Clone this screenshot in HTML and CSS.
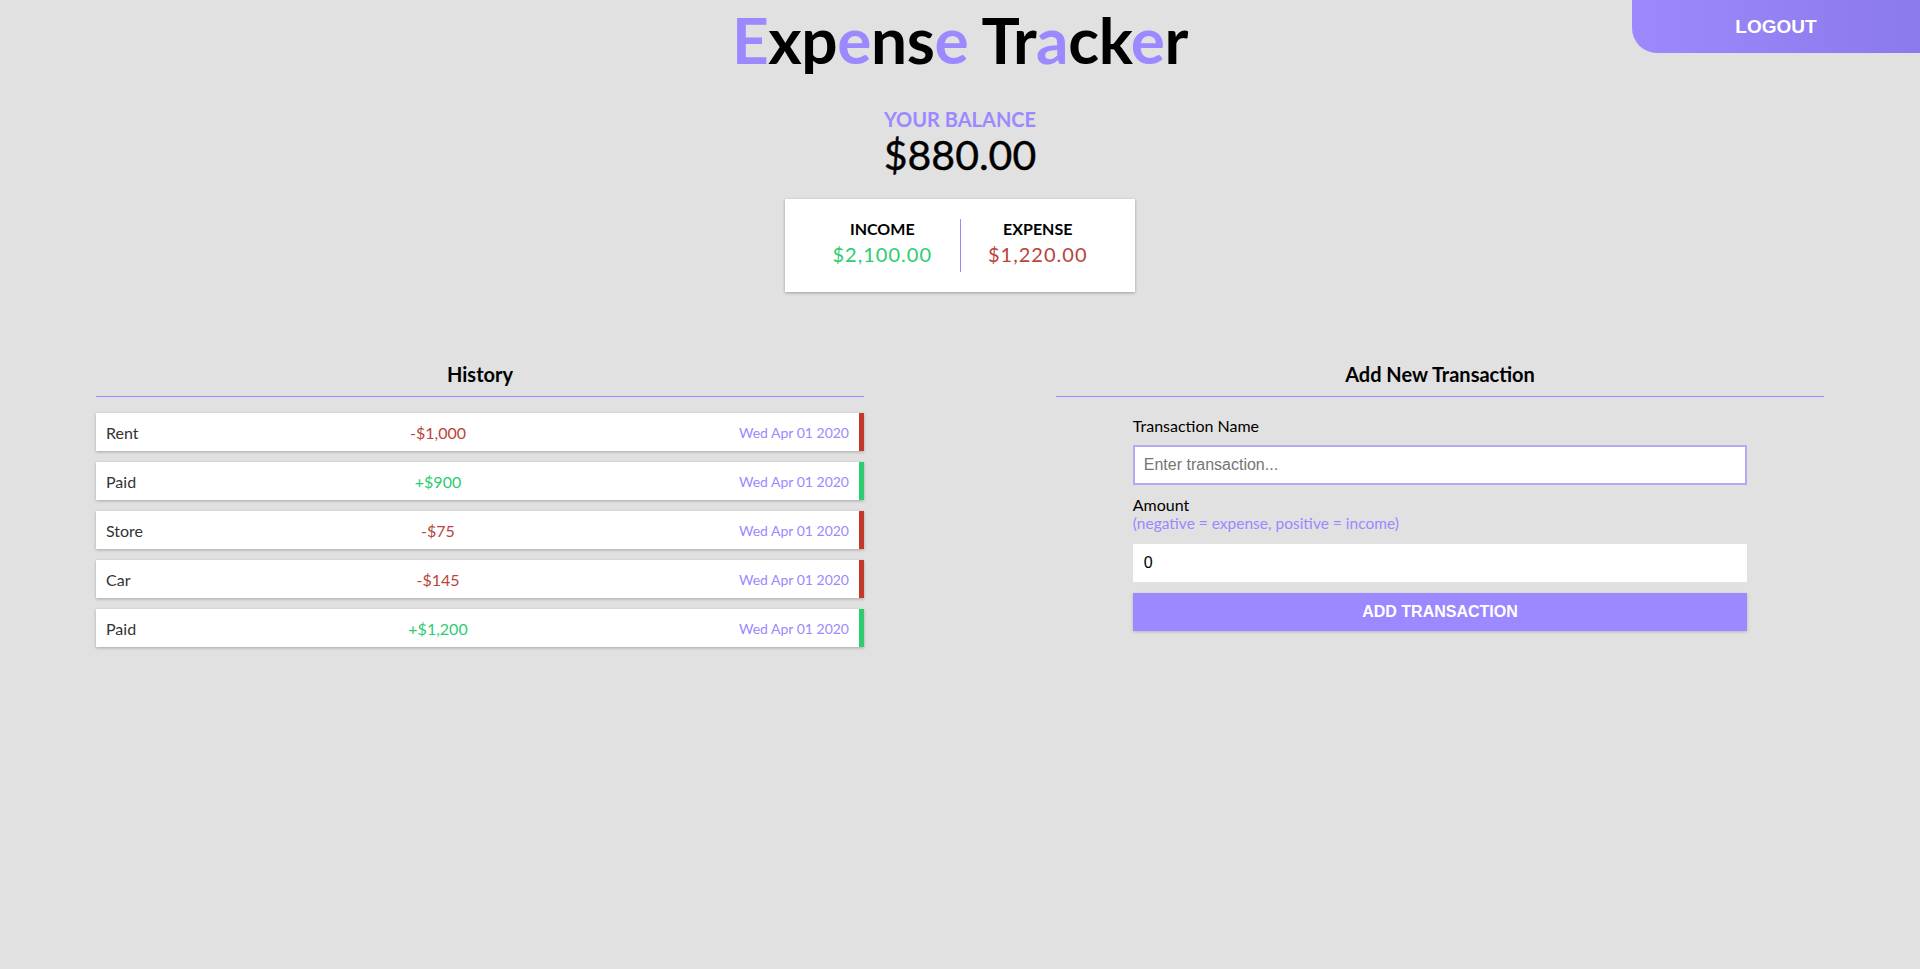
FILE: index.html
```html
<!DOCTYPE html>
<html lang="en">
<head>
<meta charset="utf-8">
<title>Expense Tracker</title>
<link rel="stylesheet" href="styles.css">
</head>
<body>
<header class="topbar">
  <div class="topbar-side"></div>
  <h1 class="title"><span class="accent">E</span>xp<span class="accent">e</span>ns<span class="accent">e</span> Tr<span class="accent">a</span>ck<span class="accent">e</span>r</h1>
  <div class="topbar-side topbar-actions">
    <button class="logout" type="button">LOGOUT</button>
  </div>
</header>

<section class="balance">
  <h4 class="balance-label">YOUR BALANCE</h4>
  <div class="balance-amount">$880.00</div>
  <div class="summary">
    <div class="summary-item summary-item-income">
      <h4 class="summary-label">INCOME</h4>
      <p class="summary-value money-plus">$2,100.00</p>
    </div>
    <div class="summary-item">
      <h4 class="summary-label">EXPENSE</h4>
      <p class="summary-value money-minus">$1,220.00</p>
    </div>
  </div>
</section>

<main class="columns">
  <section class="column">
    <h3 class="column-title">History</h3>
    <ul class="list">
      <li class="item item-minus"><span class="item-name">Rent</span><span class="item-amount money-minus">-$1,000</span><span class="item-date">Wed Apr 01 2020</span></li>
      <li class="item item-plus"><span class="item-name">Paid</span><span class="item-amount money-plus">+$900</span><span class="item-date">Wed Apr 01 2020</span></li>
      <li class="item item-minus"><span class="item-name">Store</span><span class="item-amount money-minus">-$75</span><span class="item-date">Wed Apr 01 2020</span></li>
      <li class="item item-minus"><span class="item-name">Car</span><span class="item-amount money-minus">-$145</span><span class="item-date">Wed Apr 01 2020</span></li>
      <li class="item item-plus"><span class="item-name">Paid</span><span class="item-amount money-plus">+$1,200</span><span class="item-date">Wed Apr 01 2020</span></li>
    </ul>
  </section>

  <section class="column">
    <h3 class="column-title">Add New Transaction</h3>
    <form class="form" onsubmit="return false">
      <label class="form-label" for="text">Transaction Name</label>
      <input class="form-input form-input-focused" type="text" id="text" placeholder="Enter transaction..." autofocus>
      <label class="form-label form-label-amount" for="amount">Amount<br><span class="form-hint">(negative = expense, positive = income)</span></label>
      <input class="form-input form-input-plain" type="text" id="amount" value="0">
      <button class="btn" type="submit">ADD TRANSACTION</button>
    </form>
  </section>
</main>
</body>
</html>
```

FILE: styles.css
```css
* {
  box-sizing: border-box;
}

body {
  margin: 0;
  background: #e1e1e1;
  font-family: Lato, "Noto Sans", sans-serif;
  color: #000;
}

.topbar {
  display: grid;
  grid-template-columns: 1fr auto 1fr;
  align-items: start;
}

.topbar-actions {
  display: flex;
  justify-content: flex-end;
}

.title {
  margin: 0;
  font-size: 64px;
  font-weight: 700;
  line-height: 80px;
  color: #000;
  letter-spacing: -0.4px;
}

.accent {
  color: #9c88ff;
}

.logout {
  width: 288px;
  height: 53px;
  border: none;
  border-radius: 0 0 0 25px;
  background: linear-gradient(to right, #9d89fd, #8b7aeb);
  color: #fff;
  font-family: "Liberation Sans", Arial, sans-serif;
  font-weight: 700;
  font-size: 19px;
  cursor: pointer;
  padding: 0;
}

.balance {
  display: flex;
  flex-direction: column;
  align-items: center;
  margin-top: 27px;
}

.balance-label {
  margin: 0;
  font-size: 20px;
  line-height: 24px;
  font-weight: 700;
  color: #9c88ff;
}

.balance-amount {
  font-size: 41px;
  line-height: 48px;
  font-weight: 400;
  color: #000;
  -webkit-text-stroke: 0.4px #000;
}

.summary {
  display: flex;
  width: 350px;
  margin-top: 20px;
  padding: 20px;
  background: #fff;
  box-shadow: 0 1px 3px rgba(0, 0, 0, 0.3);
}

.summary-item {
  flex: 1;
  text-align: center;
  padding-bottom: 3px;
}

.summary-item-income {
  border-right: 1px solid #9c88ff;
}

.summary-label {
  margin: 0;
  font-size: 16px;
  line-height: 20px;
  font-weight: 700;
  color: #000;
}

.summary-value {
  margin: 0;
  font-size: 20px;
  line-height: 30px;
  letter-spacing: 1px;
}

.money-plus {
  color: #2ecc71;
}

.money-minus {
  color: #b8443a;
}

.columns {
  display: flex;
  justify-content: space-around;
  margin-top: 70px;
}

.column {
  width: 40%;
}

.column-title {
  margin: 0;
  padding-bottom: 10px;
  border-bottom: 1px solid #9c88ff;
  text-align: center;
  font-size: 20px;
  line-height: 24px;
  font-weight: 700;
  color: #000;
}

.list {
  list-style: none;
  margin: 16px 0 0;
  padding: 0;
}

.item {
  display: grid;
  grid-template-columns: 250px 164px 1fr;
  align-items: center;
  height: 38px;
  padding: 0 10px;
  margin-bottom: 11px;
  background: #fff;
  box-shadow: 0 1px 3px rgba(0, 0, 0, 0.25);
  font-size: 16px;
}

.item-minus {
  border-right: 5px solid #c0392b;
}

.item-plus {
  border-right: 5px solid #2ecc71;
}

.item-name {
  color: #333;
}

.item-amount {
  text-align: center;
}

.item-date {
  text-align: right;
  font-size: 14px;
  color: #9c88ff;
}

.form {
  width: 80%;
  margin: 19px auto 0;
  display: flex;
  flex-direction: column;
}

.form-label {
  font-size: 16px;
  line-height: 19px;
  color: #000;
}

.form-label-amount {
  margin-top: 11px;
  line-height: 18px;
}

.form-hint {
  color: #9c88ff;
  font-size: 15.5px;
}

.form-input {
  width: 100%;
  font-family: "Liberation Sans", Arial, sans-serif;
  font-size: 16px;
  color: #000;
  background: #fff;
  outline: none;
}

.form-input::placeholder {
  color: #757575;
}

.form-input-focused {
  height: 40px;
  margin-top: 10px;
  border: 2px solid #b5a8f4;
  padding: 0 9px;
}

.form-input-plain {
  height: 38px;
  margin-top: 12px;
  border: none;
  padding: 0 11px;
}

.btn {
  height: 38px;
  margin-top: 11px;
  border: none;
  background: #9c88ff;
  color: #fff;
  font-family: "Liberation Sans", Arial, sans-serif;
  font-weight: 700;
  font-size: 16px;
  box-shadow: 0 1px 3px rgba(0, 0, 0, 0.2);
  cursor: pointer;
}
```
